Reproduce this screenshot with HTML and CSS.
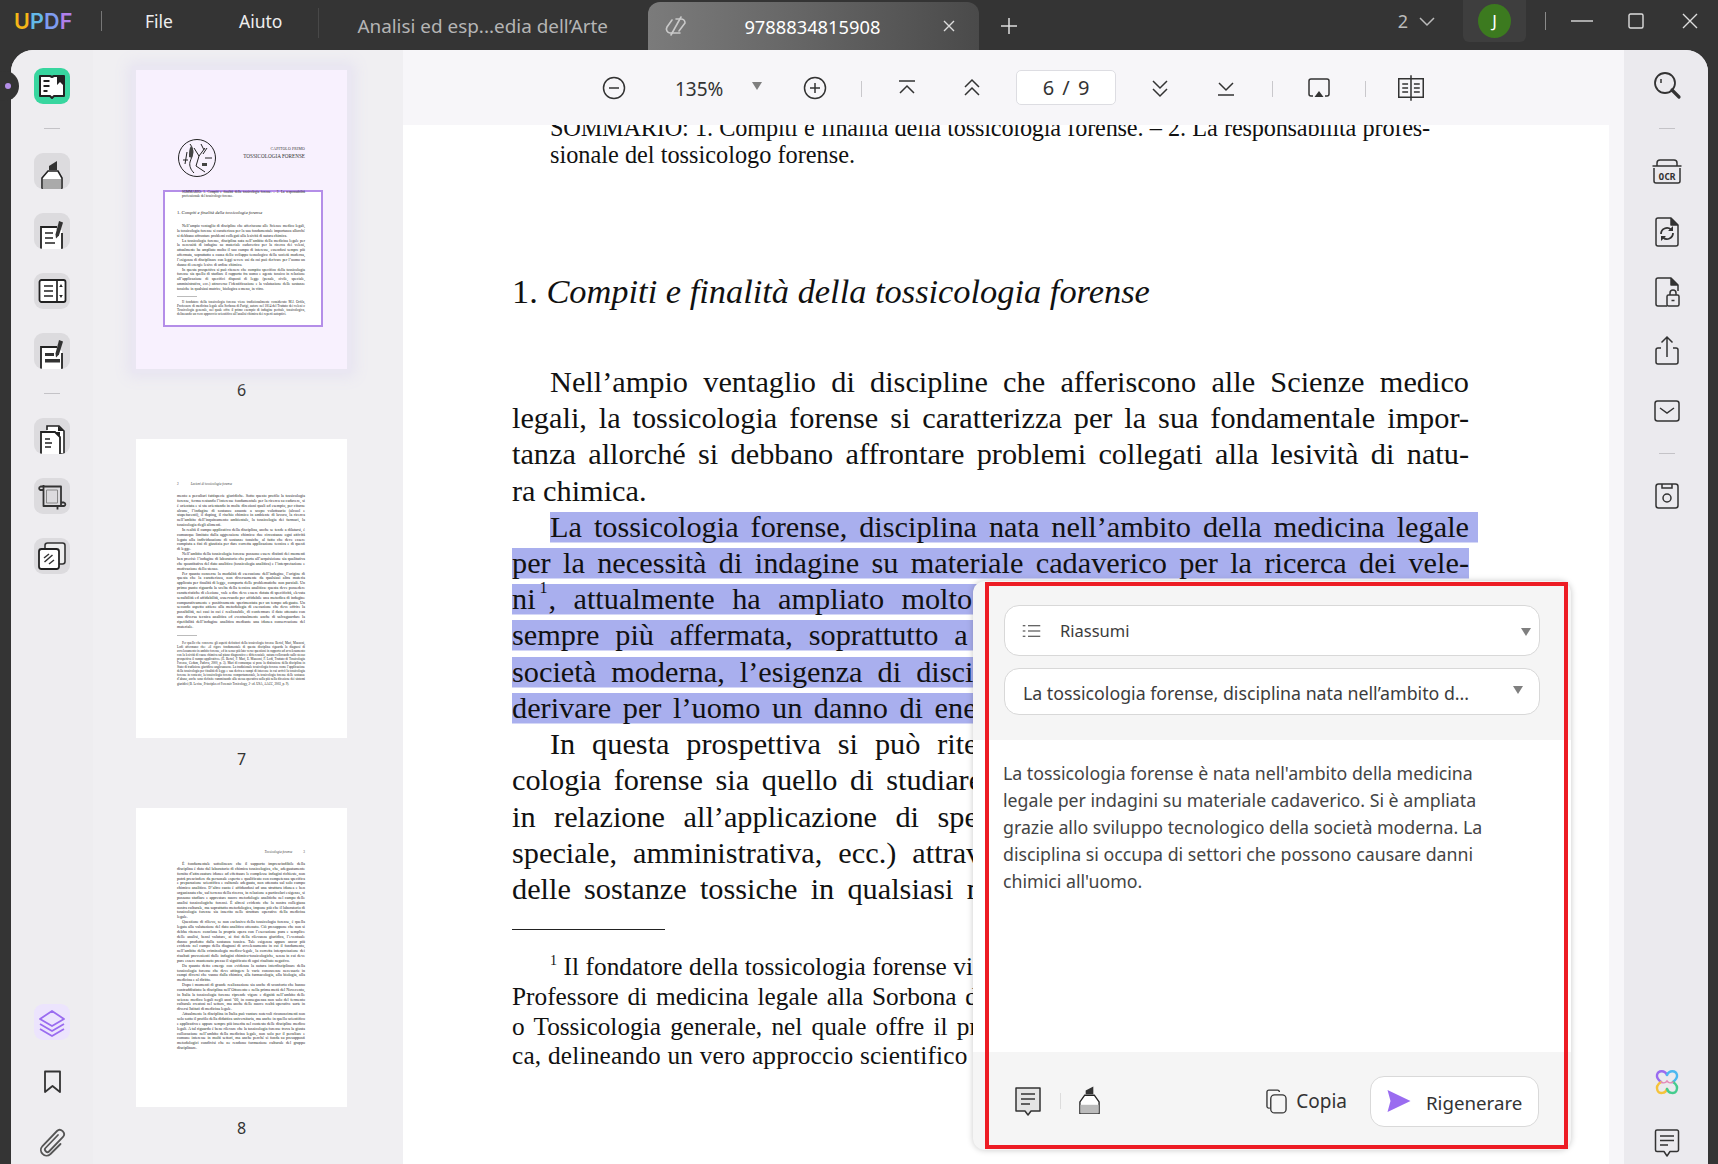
FILE: index.html
```html
<!DOCTYPE html>
<html lang="it">
<head>
<meta charset="utf-8">
<title>UPDF</title>
<link rel="stylesheet" href="styles.css">
</head>
<body>
<div class="app">
  <header class="titlebar">
    <div class="logo"><span class="l-u">U</span><span class="l-p">P</span><span class="l-d">D</span><span class="l-f">F</span></div>
    <i class="tsep tsep-logo"></i>
    <span class="menu menu-file">File</span>
    <span class="menu menu-aiuto">Aiuto</span>
    <i class="tsep tsep-dim"></i>
    <span class="tab-off">Analisi ed esp...edia dell’Arte</span>
    <div class="tab-on">
      <svg class="tab-link" viewBox="0 0 24 24" fill="none" stroke="#c9c9c9" stroke-width="1.6" stroke-linecap="round"><path d="M12 5h5a4 4 0 0 1 4 4v0L15 17"/><path d="M8 6 3 13a4 4 0 0 0 3 6h10"/><path d="M17 3 7 21"/></svg>
      <span class="tab-title">9788834815908</span>
      <svg class="tab-x" viewBox="0 0 14 14" stroke="#ddd" stroke-width="1.4"><path d="M2 2l10 10M12 2 2 12"/></svg>
    </div>
    <svg class="tab-plus" viewBox="0 0 18 18" stroke="#ddd" stroke-width="1.5"><path d="M9 1v16M1 9h16"/></svg>
    <div class="tb-right">
      <span class="pages-count">2</span>
      <svg class="chev" viewBox="0 0 16 10" fill="none" stroke="#bbb" stroke-width="1.5"><path d="M1 1l7 7 7-7"/></svg>
      <div class="avatar-box"><span class="avatar">J</span></div>
      <i class="tsep tsep-win"></i>
      <svg class="win win-min" viewBox="0 0 22 14" stroke="#ddd" stroke-width="1.4"><path d="M0 7h22"/></svg>
      <svg class="win win-max" viewBox="0 0 16 16" fill="none" stroke="#ddd" stroke-width="1.4"><rect x="1" y="1" width="14" height="14" rx="1.5"/></svg>
      <svg class="win win-close" viewBox="0 0 16 16" stroke="#ddd" stroke-width="1.4"><path d="M1 1l14 14M15 1 1 15"/></svg>
    </div>
  </header>

  <i class="notch"></i><i class="notch-dot"></i>

  <main class="panel">
    <nav class="rail">
      <div class="tile tile-green">
        <svg viewBox="0 0 36 36"><path d="M6 8h10l2 1 2-1h10v20H20l-2 2-2-2H6z" fill="#fff" stroke="#222" stroke-width="2" stroke-linejoin="round"/><path d="M23 8h6v9l-3-3-3 3z" fill="#222"/><path d="M9.500 13h6M9.500 18h6M9.500 23h4" stroke="#222" stroke-width="1.800"/></svg>
      </div>
      <i class="rsep"></i>
      <div class="tile">
        <svg viewBox="0 0 36 36"><path d="M8 36V25l6-7h10l4 7v11z" fill="#fff" stroke="#222" stroke-width="1.600"/><path d="M9 26h18v10H9z" fill="#aaa"/><path d="M15 17v-4l8-5v9z" fill="#333"/></svg>
      </div>
      <div class="tile">
        <svg viewBox="0 0 36 36"><path d="M7 36V14h15v3h6v19z" fill="#fff"/><path d="M7 36V14h16M28 20v16" fill="none" stroke="#222" stroke-width="1.800"/><path d="M11 20h8M11 25h8M11 30h10" stroke="#222" stroke-width="1.600"/><path d="M25 8l4 1.500-4 13-3 3-.5-4z" fill="#333"/></svg>
      </div>
      <div class="tile">
        <svg viewBox="0 0 36 36"><rect x="5.500" y="7" width="26" height="22" rx="2" fill="#fff" stroke="#222" stroke-width="1.800"/><path d="M23 7v22M10 13h9M10 18h9M10 23h9" stroke="#222" stroke-width="1.700"/><path d="M27 11l-1.800 3h3.600zM27 25l-1.800-3h3.600z" fill="#222"/></svg>
      </div>
      <div class="tile">
        <svg viewBox="0 0 36 36"><path d="M7 36V14h15l6 4v18z" fill="#fff"/><path d="M7 36V14h16M28 20v16" fill="none" stroke="#222" stroke-width="1.800"/><path d="M11 20h9v3h-9zM11 26h15v3.500H11z" fill="#333"/><path d="M25 7l4 1.500-4 13-3 3-.5-4z" fill="#333"/></svg>
      </div>
      <i class="rsep"></i>
      <div class="tile">
        <svg viewBox="0 0 36 36"><path d="M13 12V8h12l5 5v23h-3" fill="#fff" stroke="#222" stroke-width="1.600"/><path d="M7 36V14h14l5 5v17z" fill="#fff"/><path d="M7 36V14h14l5 5v17" fill="none" stroke="#222" stroke-width="1.800"/><path d="M21 14h5v5zM24 8l6 5h-6z" fill="#222"/><path d="M11 21h5M11 25h7M11 29h6" stroke="#222" stroke-width="1.500"/></svg>
      </div>
      <div class="tile">
        <svg viewBox="0 0 36 36" fill="none" stroke="#333" stroke-width="1.800" stroke-linejoin="round"><path d="M9.500 7v21h17.500V8.500H6.500a1.800 1.800 0 0 0 0 3.500h3M27 24.500h3a1.800 1.800 0 0 1 0 3.500h-3M23.500 28v3.500"/><path d="M12.500 12h11v13h-11z" stroke="#888" stroke-width="1"/></svg>
      </div>
      <div class="tile">
        <svg viewBox="0 0 36 36"><rect x="11" y="5" width="20" height="21" rx="2.500" fill="#eee" stroke="#333" stroke-width="1.600"/><rect x="5" y="11" width="20" height="20" rx="2.500" fill="#fff" stroke="#222" stroke-width="1.800"/><path d="M10 20l5-4M10.500 24l8-7M15 26l5-4" stroke="#333" stroke-width="1.500"/></svg>
      </div>
      <div class="tile tile-purple rail-bottom">
        <svg viewBox="0 0 36 36" fill="none" stroke="#9a6cf0" stroke-width="1.800" stroke-linejoin="round"><path d="M18 7 30 15 18 22 6 15z"/><path d="M6 20l12 7 12-7M6 25l12 7 12-7"/></svg>
      </div>
      <div class="tile tile-plain">
        <svg viewBox="0 0 36 36" fill="none" stroke="#333" stroke-width="1.800" stroke-linejoin="round"><path d="M11 7.500h15V28l-7.500-6L11 28z"/></svg>
      </div>
      <div class="tile tile-plain">
        <svg viewBox="0 0 36 36" fill="none" stroke="#555" stroke-width="1.800" stroke-linecap="round"><path d="M24 11 11.500 24c-2 2 1.500 5.500 3.500 3.500L29 13c3.500-4-2.500-9.500-6-6L8.500 22c-5 5.500 2.500 13 8 8l10-10"/></svg>
      </div>
    </nav>

    <aside class="thumbs">
      <div class="thumb">
        <div class="sheet sheet-active">
          <i class="viewport"></i>
          <div class="t-open">
            <svg class="t-emblem" viewBox="0 0 40 40" fill="none" stroke="#222"><circle cx="20" cy="20" r="18.500" stroke-width="1"/><path d="M13 6c5 6 2 12 0 18-1 4 1 8 4 11M17 10l5 8 6-8M22 18l-3 10 9 6M28 20h7M10 14l-2 12M24 6l3 6M30 10l-4 6M6 22h5" stroke-width="1"/><path d="M14 8c3 4 3 7 1 12l-3-1c0-5 0-8 2-11zM25 25h5v3h-5z" fill="#444" stroke="none"/></svg>
            <div class="t-titles"><div class="t-chap">CAPITOLO PRIMO</div><div class="t-chaptitle">TOSSICOLOGIA FORENSE</div></div>
          </div>
          <p class="t-summary">SOMMARIO: 1. Compiti e finalità della tossicologia forense. – 2. La responsabilità professionale del tossicologo forense.</p>
          <p class="t-head">1. <em>Compiti e finalità della tossicologia forense</em></p>
          <p class="t-p">Nell’ampio ventaglio di discipline che afferiscono alle Scienze medico legali, la tossicologia forense si caratterizza per la sua fondamentale importanza allorché si debbano affrontare problemi collegati alla lesività di natura chimica.</p>
          <p class="t-p">La tossicologia forense, disciplina nata nell’ambito della medicina legale per la necessità di indagine su materiale cadaverico per la ricerca dei veleni, attualmente ha ampliato molto il suo campo di interesse, essendosi sempre più affermata, soprattutto a causa dello sviluppo tecnologico della società moderna, l’esigenza di disciplinare con leggi severe usi da cui può derivare per l’uomo un danno di energie lesive di ordine chimico.</p>
          <p class="t-p">In questa prospettiva si può ritenere che compito specifico della tossicologia forense sia quello di studiare il rapporto fra uomo e agente tossico in relazione all’applicazione di specifici disposti di legge (penale, civile, speciale, amministrativa, ecc.) attraverso l’identificazione e la valutazione delle sostanze tossiche in qualsiasi matrice, biologica o meno, in vitro.</p>
          <i class="t-rule"></i>
          <p class="t-foot">Il fondatore della tossicologia forense viene tradizionalmente considerato M.J. Orfila, Professore di medicina legale alla Sorbona di Parigi, autore nel 1814 del Trattato dei veleni o Tossicologia generale, nel quale offre il primo esempio di indagine peritale, tossicologica, delineando un vero approccio scientifico all’analisi chimica dei reperti autoptici.</p>
        </div>
        <div class="thumb-num">6</div>
      </div>
      <div class="thumb">
        <div class="sheet">
          <div class="t-run"><span>2</span><em>Lezioni di tossicologia forense</em></div>
          <p class="t-p t-first">mento a peculiari fattispecie giuridiche. Sotto questo profilo la tossicologia forense, ferma restando l’interesse fondamentale per la ricerca su cadavere, si è orientata e si sta orientando in molte direzioni quali ad esempio, per citarne alcune, l’indagine di sostanze assunte a scopo voluttuario (alcool e stupefacenti), il doping, il rischio chimico in ambiente di lavoro, la ricerca nell’ambito dell’inquinamento ambientale, la tossicologia dei farmaci, la tossicologia degli alimenti.</p>
          <p class="t-p">In realtà il campo applicativo della disciplina, anche se tende a dilatarsi, è comunque limitato dalla aggressione chimica: due circostanze ogni attività legata alla individuazione di sostanze tossiche, al fatto che deve essere compiuta a fini di giustizia per dare corretta applicazione tecnica e di questi di legge.</p>
          <p class="t-p">Nell’ambito della tossicologia forense possono essere distinti dei momenti ben precisi: l’indagine di laboratorio che porta all’acquisizione sia qualitativa che quantitativa del dato analitico (tossicologia analitica) e l’interpretazione e motivazione dello stesso.</p>
          <p class="t-p">Per quanto concerne la modalità di esecuzione dell’indagine, l’origine di questa che la caratterizza, non diversamente da qualsiasi altra materia applicata per finalità di legge, comporta delle problematiche non parziali. Un primo punto riguarda la scelta della tecnica analitica: questa deve possedere caratteristiche di elezione, vale a dire deve essere dotata di specificità, elevata sensibilità ed affidabilità, osservando per affidabile una metodica di indagine comparativamente e positivamente sperimentata per un tempo adeguato. Un secondo aspetto attiene alla metodologia di esecuzione che deve offrire la possibilità, nei casi in cui è realizzabile, di confermare il dato ottenuto con una diversa tecnica analitica ed eventualmente anche di salvaguardare la ripetibilità dell’indagine analitica mediante una idonea conservazione del materiale.</p>
          <i class="t-rule t-rule-7"></i>
          <p class="t-foot t-foot-dense">Per quello che concerne gli aspetti definitori della tossicologia forense Bertol, Mari, Mazzoni, Lodi affermano che: «il rigore fondamentale di questa disciplina riguarda la diagnosi di avvelenamento in ambito forense, ed in senso più lato verso questioni in rapporto ad avvelenamento con la lesività di cause chimica sul piano diagnostico e differenziale, natura collocando sullo stesso prospettiva il campo applicativo» (E. Bertol, F. Mari, E. Mazzoni, F. Lodi, Trattato di Tossicologia Forense, Cedam, Padova, 2000, p. 3). Mari di comunque si pone la distinzione della disciplina in Stato di tradizione giuridica: anglosassone. La tradizionale tossicologia forense come l’applicazione della tossicologia per finalità di legge e sua deriva a campi di interesse in cui arrivò la tossicologia forense in contesto, la tossicologia forense comportamentale, la tossicologia forense delle sostanze d’abuso, anche sono definite camminando alla stessa operativa sulla più nella direzione dei sintomi giuridici (B. Levine, Principles of Forensic Toxicology, 2ª ed. USA, AACC, 2003, p. 9).</p>
        </div>
        <div class="thumb-num">7</div>
      </div>
      <div class="thumb">
        <div class="sheet">
          <div class="t-run t-run-right"><em>Tossicologia forense</em><span>3</span></div>
          <p class="t-p t-first8">È fondamentale sottolineare che il supporto imprescindibile della disciplina è dato dal laboratorio di chimica tossicologica, che, adeguatamente fornito d’attrezzature idonee ad effettuare le complesse indagini richieste, non potrà prescindere da personale esperto e qualificato con competenza specifica e preparazione scientifica e culturale adeguata, non ottenuta sul solo campo chimico analitico. D’altro canto è affidandosi ad una struttura idonea e ben organizzata che, sul terreno della ricerca, in relazione a particolari esigenze, si possono studiare e apprestare nuove metodologie analitiche nel campo delle analisi tossicologiche forensi. È altresì evidente che la nostra collegiana nostra culturale, ma soprattutto metodologica, impone più che il laboratorio di tossicologia forense sia inserito nelle strutture operative della medicina legale.</p>
          <p class="t-p">Questione di rilievo, se non esclusivo della tossicologia forense, è quella legata alla valutazione del dato analitico ottenuto. Ciò presuppone che non si debba ritenere conclusa la propria opera con l’esecuzione pura e semplice delle analisi, bensì valutare, ai fini della rilevanza giuridica, l’eventuale danno prodotto dalla sostanza tossica. Tale esigenza appare ancor più evidente nel campo della diagnosi di avvelenamento in cui il fondamento, nell’ambito della criminologia medico-legale, la corretta interpretazione dei risultati provenienti dalle indagini chimico-tossicologiche, senza in cui deve pure essere mantenuto presso il significato di ogni risultato negativo.</p>
          <p class="t-p">Da quanto detto emerge con evidenza la natura interdisciplinare della tossicologia forense che deve attingere le varie conoscenze necessarie in campi diversi che vanno dalla chimica, alla farmacologia, alla biologia, alla medicina e al diritto.</p>
          <p class="t-p">Dopo i momenti di grande realizzazione sia anche di sconforto che hanno contraddistinto la disciplina nell’Ottocento e nella prima metà del Novecento, in Italia la tossicologia forense riprende vigore e dignità nell’ambito delle scienze medico legali negli anni ’60, in conseguenza non solo del fermento culturale creatosi nel settore, ma anche delle nuove realtà operative sorte in diversi Istituti di medicina legale.</p>
          <p class="t-p">Attualmente la disciplina in Italia può vantare notevoli riconoscimenti non solo sotto il profilo della didattica universitaria, ma anche in quello scientifico e applicativo e appare sempre più inserita nel contesto delle discipline medico legali. A tal riguardo è bene rilevare che la tossicologia forense trova la giusta collocazione nell’ambito della medicina legale, non solo per il peculiare e comune interesse in molti settori, ma anche perché si fonda su presupposti metodologici condivisi che ne rendono formazione culturale del gruppo disciplinare.</p>
        </div>
        <div class="thumb-num">8</div>
      </div>
    </aside>

    <section class="center">
      <div class="toolbar">
        <svg class="tic" viewBox="0 0 24 24" fill="none" stroke="#333" stroke-width="1.500"><circle cx="12" cy="12" r="10.500"/><path d="M7 12h10"/></svg>
        <span class="zoom-val">135%</span>
        <i class="caret caret-zoom"></i>
        <svg class="tic tic-plus" viewBox="0 0 24 24" fill="none" stroke="#333" stroke-width="1.500"><circle cx="12" cy="12" r="10.500"/><path d="M7 12h10M12 7v10"/></svg>
        <i class="bar bar-a"></i>
        <svg class="tic tic-top" viewBox="0 0 24 24" fill="none" stroke="#333" stroke-width="1.500"><path d="M4 5h16M5 17l7-7 7 7"/></svg>
        <svg class="tic tic-wide" viewBox="0 0 24 24" fill="none" stroke="#333" stroke-width="1.500"><path d="M5 11l7-7 7 7M5 19l7-7 7 7"/></svg>
        <div class="pager">6 / 9</div>
        <svg class="tic" viewBox="0 0 24 24" fill="none" stroke="#333" stroke-width="1.500"><path d="M5 5l7 7 7-7M5 13l7 7 7-7"/></svg>
        <svg class="tic tic-wide tic-bottom" viewBox="0 0 24 24" fill="none" stroke="#333" stroke-width="1.500"><path d="M5 7l7 7 7-7M4 19h16"/></svg>
        <i class="bar"></i>
        <svg class="tic tic-present" viewBox="0 0 24 24" fill="none" stroke="#333" stroke-width="1.500"><path d="M6 20H4a2 2 0 0 1-2-2V5a2 2 0 0 1 2-2h16a2 2 0 0 1 2 2v13a2 2 0 0 1-2 2h-2"/><path d="M12 15l4.500 6h-9z" fill="#333" stroke="none"/></svg>
        <i class="bar"></i>
        <svg class="tic tic-book" viewBox="0 0 24 24" fill="none" stroke="#333" stroke-width="1.300"><path d="M12 1v22M12 4H1.500v16H12M12 4h10.500v16H12"/><path d="M4.500 8.500h5M4.500 12h5M4.500 15.500h5M14.500 8.500h5M14.500 12h5M14.500 15.500h5"/></svg>
      </div>
      <div class="docarea">
        <article class="page">
          <div class="summary">
            <div class="ln ln-tight">SOMMARIO: 1. Compiti e finalità della tossicologia forense. – 2. La responsabilità profes-</div>
            <div class="ln ln-end">sionale del tossicologo forense.</div>
          </div>
          <h1 class="heading">1. <em>Compiti e finalità della tossicologia forense</em></h1>
          <div class="body">
            <div class="ln ind">Nell’ampio ventaglio di discipline che afferiscono alle Scienze medico</div>
            <div class="ln">legali, la tossicologia forense si caratterizza per la sua fondamentale impor-</div>
            <div class="ln">tanza allorché si debbano affrontare problemi collegati alla lesività di natu-</div>
            <div class="ln ln-end">ra chimica.</div>
            <div class="ln ind sel sel-first">La tossicologia forense, disciplina nata nell’ambito della medicina legale</div>
            <div class="ln sel">per la necessità di indagine su materiale cadaverico per la ricerca dei vele-</div>
            <div class="ln sel">ni<sup class="fn">1</sup>, attualmente ha ampliato molto il suo campo di interesse, essendosi</div>
            <div class="ln sel">sempre più affermata, soprattutto a causa del progresso tecnologico della</div>
            <div class="ln sel">società moderna, l’esigenza di disciplinare con leggi severe usi cui possa</div>
            <div class="ln sel">derivare per l’uomo un danno di energie lesive di ordine chimico o fisico e</div>
            <div class="ln ind">In questa prospettiva si può ritenere che compito specifico della tos-</div>
            <div class="ln">cologia forense sia quello di studiare il rapporto fra uomo e agente tossico</div>
            <div class="ln">in relazione all’applicazione di specifici dettati di legge (penale, civile,</div>
            <div class="ln">speciale, amministrativa, ecc.) attraverso l’individuazione e la valutazione</div>
            <div class="ln">delle sostanze tossiche in qualsiasi matrice, biologica o meno, sia in vitro.</div>
          </div>
          <i class="rule"></i>
          <div class="notes">
            <div class="ln ind"><sup class="fn2">1</sup> Il fondatore della tossicologia forense viene tradizionalmente considerato M. J. B. Orfila,</div>
            <div class="ln">Professore di medicina legale alla Sorbona di Parigi, autore nel 1814 del Trattato dei veleni</div>
            <div class="ln">o Tossicologia generale, nel quale offre il primo esempio di indagine peritale e tossicologi-</div>
            <div class="ln ln-end ln-loose">ca, delineando un vero approccio scientifico all’analisi chimica dei reperti autoptici.</div>
          </div>
        </article>
      </div>

      <div class="popup">
        <div class="pop-head">
          <div class="dd dd-a">
            <svg class="dd-ic" viewBox="0 0 20 16" stroke="#333" stroke-width="1.200"><path d="M6 2h14M6 8h14M6 14h14M0 2h3M0 8h3M0 14h3"/></svg>
            <span>Riassumi</span>
            <i class="caret caret-dd"></i>
          </div>
          <div class="dd dd-b">
            <span>La tossicologia forense, disciplina nata nell’ambito d...</span>
            <i class="caret caret-dd2"></i>
          </div>
        </div>
        <div class="pop-body">La tossicologia forense è nata nell'ambito della medicina<br>legale per indagini su materiale cadaverico. Si è ampliata<br>grazie allo sviluppo tecnologico della società moderna. La<br>disciplina si occupa di settori che possono causare danni<br>chimici all'uomo.</div>
        <div class="pop-foot">
          <svg class="pf-note" viewBox="0 0 28 30"><path d="M2 2h24v23h-9l-3 4-3-4H2z" fill="#e4e4e4" stroke="#333" stroke-width="1.500" stroke-linejoin="round"/><path d="M7 8h14M7 13h14M7 18h9" stroke="#333" stroke-width="1.500"/></svg>
          <i class="pf-sep"></i>
          <svg class="pf-mark" viewBox="0 0 24 30"><path d="M2 29V17l5-7h10l5 7v12z" fill="#fff" stroke="#222" stroke-width="1.400"/><path d="M2.500 20h19v9h-19z" fill="#bbb"/><path d="M8 9V5l8-4v8z" fill="#333"/></svg>
          <svg class="pf-copy" viewBox="0 0 22 26" fill="none" stroke="#333" stroke-width="1.400"><path d="M4 20H3a2 2 0 0 1-2-2V3a2 2 0 0 1 2-2h9a2 2 0 0 1 2 2"/><rect x="5" y="6" width="16" height="19" rx="4" /></svg>
          <span class="pf-copytxt">Copia</span>
          <div class="regen">
            <svg class="regen-ic" viewBox="0 0 24 24"><path d="M1 1l23 11L1 23l3-11z" fill="#9a6cf0"/></svg>
            <span>Rigenerare</span>
          </div>
        </div>
        <i class="annot"></i>
      </div>
    </section>

    <div class="gutter"></div>

    <nav class="rail rail-r">
      <div class="tile tile-plain">
        <svg viewBox="0 0 36 36" fill="none" stroke="#333" stroke-width="1.800"><circle cx="16" cy="15" r="10"/><path d="M12 11v4" stroke-width="1.500"/><path d="M23 22l7 7" stroke-width="3.200" stroke-linecap="round"/></svg>
      </div>
      <i class="rsep"></i>
      <div class="tile tile-plain">
        <svg viewBox="0 0 36 36" fill="none" stroke="#333" stroke-width="1.500"><path d="M8 13v-3a3 3 0 0 1 3-3h14a3 3 0 0 1 3 3v3M3.500 13h29M5 15v13a2 2 0 0 0 2 2h22a2 2 0 0 0 2-2V15"/><text x="18" y="26.500" class="ocr">OCR</text></svg>
      </div>
      <div class="tile tile-plain">
        <svg viewBox="0 0 36 36" fill="none" stroke="#333" stroke-width="1.500" stroke-linejoin="round"><path d="M9 5h13l7 7v19a2 2 0 0 1-2 2H9a2 2 0 0 1-2-2V7a2 2 0 0 1 2-2z"/><path d="M22 5v7h7" fill="#333"/><path d="M12 21a6 6 0 0 1 10-4.500M24 20a6 6 0 0 1-10 4.500" stroke-width="1.800"/><path d="M24 13v5h-5zM12 28v-5h5z" fill="#333" stroke="none"/></svg>
      </div>
      <div class="tile tile-plain">
        <svg viewBox="0 0 36 36" fill="none" stroke="#333" stroke-width="1.500" stroke-linejoin="round"><path d="M18 33H9a2 2 0 0 1-2-2V7a2 2 0 0 1 2-2h13l7 7v6"/><path d="M22 5v7h7" fill="#333"/><rect x="18" y="22" width="12" height="11" rx="1.500"/><path d="M21 22v-2a3 3 0 0 1 6 0v2M22.500 27.500h3"/></svg>
      </div>
      <div class="tile tile-plain">
        <svg viewBox="0 0 36 36" fill="none" stroke="#333" stroke-width="1.500"><path d="M12 15H9a2 2 0 0 0-2 2v12a2 2 0 0 0 2 2h18a2 2 0 0 0 2-2V17a2 2 0 0 0-2-2h-3M18 24V4M12.500 9.500 18 4l5.500 5.500"/></svg>
      </div>
      <div class="tile tile-plain">
        <svg viewBox="0 0 36 36" fill="none" stroke="#333" stroke-width="1.500"><rect x="6" y="8" width="24" height="20" rx="2.500"/><path d="M11 15l7 5 7-5"/></svg>
      </div>
      <i class="rsep"></i>
      <div class="tile tile-plain">
        <svg viewBox="0 0 36 36" fill="none" stroke="#333" stroke-width="1.500"><rect x="7" y="6" width="22" height="24" rx="2.500"/><path d="M13 6v4h10V6"/><circle cx="18" cy="20" r="4"/></svg>
      </div>
      <div class="tile tile-plain rail-bottom">
        <svg viewBox="0 0 36 36" fill="none" stroke-width="2.400" stroke-linecap="round"><path d="M18 11c-2-5-9-5-10 0-.5 3 1.500 5 4 7" stroke="#9a6cf0"/><path d="M18 11c2-5 9-5 10 0 .5 3-1.500 5-4 7" stroke="#4db8f0"/><path d="M12 18c-3 2-5 5-3.500 8.500 2 4 8 3 9.500-1.500" stroke="#f5c33b"/><path d="M24 18c3 2 5 5 3.500 8.500-2 4-8 3-9.500-1.500" stroke="#45cc8e"/><path d="M12 18c2 1 4 2 6-1 2 3 4 2 6 1" stroke="#e48ab8" stroke-width="1.500"/></svg>
      </div>
      <div class="tile tile-plain">
        <svg viewBox="0 0 36 36" fill="none" stroke="#333" stroke-width="1.500" stroke-linejoin="round"><path d="M8 6h20a1.500 1.500 0 0 1 1.500 1.500V26a1.500 1.500 0 0 1-1.500 1.500h-7L18 32l-3-4.500H8A1.500 1.500 0 0 1 6.500 26V7.500A1.500 1.500 0 0 1 8 6z"/><path d="M11 12h14M11 16.500h14M11 21h8"/></svg>
      </div>
    </nav>
  </main>
</div>
</body>
</html>
```

FILE: styles.css
```css
* { box-sizing: border-box; }
html, body { margin: 0; padding: 0; }
body { background: #343434; font-family: "Noto Sans", "Open Sans", sans-serif; color: #333; }
i { display: block; }
.app { position: relative; width: 1718px; height: 1164px; overflow: hidden; display: flex; flex-direction: column; }

/* Title bar */
.titlebar { height: 50px; flex: none; display: flex; align-items: flex-start; color: #eee; }
.logo { margin: 6px 0 0 14px; width: 58px; font: 600 21.500px/30px "Inter", "Noto Sans", sans-serif; letter-spacing: .2px; }
.l-u { color: #f4b619; } .l-p { color: #63b9e8; } .l-d { color: #7f9cf0; } .l-f { color: #b07fea; }
.tsep { width: 1px; background: #777; }
.tsep-logo { height: 20px; margin: 11px 0 0 29px; }
.menu { font-size: 17.500px; line-height: 24px; margin-top: 9px; color: #eee; }
.menu-file { margin-left: 43px; }
.menu-aiuto { margin-left: 66px; }
.tsep-dim { height: 30px; margin: 8px 0 0 36px; background: #484848; }
.tab-off { font-size: 18.900px; line-height: 26px; margin: 13px 0 0 38px; color: #b5b5b5; width: 291px; white-space: nowrap; }
.tab-on { width: 331px; height: 48px; margin-top: 2px; border-radius: 12px 12px 0 0; background: linear-gradient(90deg, #7b7b7b, #666 45%, #4a4a4a); display: flex; align-items: center; }
.tab-link { width: 24px; height: 24px; margin-left: 16px; }
.tab-title { font-size: 18.300px; margin-left: 56px; color: #fff; width: 136px; white-space: nowrap; }
.tab-x { width: 14px; height: 14px; margin-left: 62px; }
.tab-plus { width: 18px; height: 18px; margin: 17px 0 0 21px; }
.tb-right { margin-left: auto; display: flex; align-items: flex-start; }
.pages-count { font-size: 18px; line-height: 26px; margin-top: 8px; color: #bbb; }
.chev { width: 16px; height: 10px; margin: 17px 0 0 11px; }
.avatar-box { width: 63px; height: 42px; margin-left: 28px; border-radius: 0 0 6px 6px; background: #3e3e3e; display: flex; align-items: center; justify-content: center; }
.avatar { width: 33px; height: 34px; border-radius: 50%; background: #3c7a1f; color: #fff; font-size: 17px; line-height: 34px; text-align: center; }
.tsep-win { height: 18px; margin: 12px 0 0 19px; background: #8a8a8a; }
.win { flex: none; }
.win-min { width: 22px; height: 14px; margin: 14px 0 0 25px; }
.win-max { width: 16px; height: 16px; margin: 13px 0 0 35px; }
.win-close { width: 16px; height: 16px; margin: 13px 20px 0 38px; }

/* Notch */
.notch { position: absolute; left: -9px; top: 71px; width: 28px; height: 30px; border-radius: 50%; background: #343434; z-index: 3; }
.notch-dot { position: absolute; left: 5px; top: 83px; width: 6px; height: 6px; border-radius: 50%; background: #b48ee8; z-index: 4; }

/* Panel */
.panel { flex: 1; min-height: 0; margin: 0 10px 0 11px; display: flex; border-radius: 22px 22px 0 0; overflow: hidden; background: #eeedf0; }
.rail { width: 82px; flex: none; display: flex; flex-direction: column; align-items: center; gap: 24px; padding: 18px 0 4px; background: #eeedf0; }
.rail-r { width: 84px; padding-left: 2px; background: #ebeaee; }
.rail-bottom { margin-top: auto; }
.tile { width: 36px; height: 36px; flex: none; border-radius: 9px; background: #dcdbde; overflow: hidden; }
.tile svg { display: block; width: 36px; height: 36px; }
.tile-green { background: #38d69f; }
.tile-purple { background: #ece4fd; }
.tile-plain { background: none; overflow: visible; }
.rsep { width: 16px; height: 1px; flex: none; background: #c4c3c7; }
.ocr { font: 700 9.500px "DejaVu Sans Mono", monospace; fill: #333; stroke: none; text-anchor: middle; }

/* Thumbnails */
.thumbs { width: 310px; flex: none; padding: 20px 0 0 43px; display: flex; flex-direction: column; gap: 38px; background: #f0eff2; overflow: hidden; }
.thumb { width: 211px; flex: none; }
.thumb-num { margin-top: 10px; height: 22px; font-size: 16px; line-height: 22px; text-align: center; color: #333; }
.sheet { position: relative; width: 211px; height: 299px; padding: 0 42px 0 41px; background: #fff; font-family: "Liberation Serif", serif; color: #222; font-size: 4.100px; line-height: 4.850px; text-align: justify; }
.sheet p { margin: 0; position: relative; }
.sheet-active { background: #f8f1fe; box-shadow: 0 0 0 4px #eae7f2, 0 0 14px 8px #e6e3f0; font-size: 3.900px; }
.viewport { position: absolute; left: 27px; top: 120px; width: 160px; height: 137px; border: 2px solid #b48ee8; background: #fff; }
.t-open { position: relative; display: flex; justify-content: space-between; align-items: flex-start; padding-top: 68px; height: 120px; }
.t-emblem { width: 40px; height: 40px; flex: none; }
.t-titles { text-align: right; padding-top: 8px; color: #333; }
.t-chap { font-size: 3.800px; letter-spacing: .2px; line-height: 6px; }
.t-chaptitle { font-size: 5.200px; line-height: 9px; white-space: nowrap; }
.t-summary { padding-left: 5px; font-size: 3.400px; line-height: 4px; }
.t-head { margin-top: 12px !important; margin-bottom: 8px !important; font-size: 4.600px; line-height: 6px; text-align: left; }
.t-p { text-indent: 5px; }
.t-rule { position: relative; width: 20px; height: 1px; margin: 4px 0 3px; background: #bbb; }
.t-foot { font-size: 3.400px; line-height: 4px; text-indent: 5px; }
.t-run { display: flex; gap: 12px; padding-top: 43px; height: 50px; font-size: 3.400px; line-height: 5px; color: #444; }
.t-run-right { justify-content: flex-end; gap: 11px; padding-top: 42px; height: 50px; }
.t-first { margin-top: 5px !important; text-indent: 0; }
.t-first8 { margin-top: 4px !important; }
.t-rule-7 { margin: 5px 0 5px; }
.t-foot-dense { font-size: 3.200px; line-height: 4.100px; }

/* Center */
.center { position: relative; width: 1221px; flex: none; display: flex; flex-direction: column; background: #f7f6f9; }
.toolbar { height: 75px; flex: none; padding: 2px 0 0 199px; display: flex; align-items: center; gap: 34px; background: #f7f6f9; }
.tic { width: 24px; height: 24px; flex: none; margin-top: -2px; }
.tic-plus { margin-left: 7px; }
.tic-top { margin-left: -1px; }
.tic-wide { margin-left: 7px; }
.tic-bottom { margin-left: 8px; }
.tic-book { width: 28px; height: 28px; margin-left: -3px; }
.zoom-val { width: 48px; margin-left: 15px; margin-right: -5px; font-size: 19px; color: #333; flex: none; }
.caret { width: 0; height: 0; border-left: 5px solid transparent; border-right: 5px solid transparent; border-top: 8px solid #7f7f7f; flex: none; }
.caret-zoom { margin-top: -6px; }
.bar { width: 1px; height: 16px; flex: none; background: #c9c8cc; }
.pager { width: 100px; height: 35px; flex: none; margin: -3px -2px 0 -2px; border: 1px solid #dddde2; border-radius: 5px; background: #fff; font-size: 20px; line-height: 33px; text-align: center; word-spacing: 3px; color: #333; }
.docarea { width: 1206px; flex: 1; min-height: 0; background: #fff; overflow: hidden; }
.page { margin-top: -11px; padding-left: 109px; width: 1066px; font-family: "Liberation Serif", serif; color: #111; }
.ln { text-align: justify; text-align-last: justify; white-space: nowrap; }
.ln-end { text-align-last: left; }
.ln-tight { letter-spacing: -.2px; }
.ln-loose { letter-spacing: .2px; }
.summary { margin-left: 38px; margin-right: 39px; font-size: 24.300px; line-height: 27.400px; }
.heading { margin: 97px 0 0; font-size: 34.400px; font-weight: 400; line-height: 50px; }
.body { margin-top: 48px; font-size: 30.300px; line-height: 36.240px; }
.ind { margin-left: 38px; }
.sel { background: linear-gradient(#a9afee, #a9afee) 0 3px / 100% 30.500px no-repeat; }
.sel-first { margin-right: -9px; padding-right: 9px; }
.fn { font-size: 16px; line-height: 0; vertical-align: 16px; padding: 0 1px 0 4px; }
.fn2 { font-size: 14px; line-height: 0; vertical-align: 10px; }
.rule { width: 153px; height: 1px; margin-top: 22px; background: #222; }
.notes { margin-top: 22px; font-size: 25.300px; line-height: 29.600px; }

.gutter { width: 0; flex: none; }

/* Popup */
.popup { position: absolute; left: 570px; top: 531px; width: 598px; height: 569px; display: flex; flex-direction: column; background: #f5f5f5; border-radius: 12px; box-shadow: 0 0 6px rgba(0,0,0,.22); font-size: 17.750px; color: #3c3c3c; }
.pop-head { height: 159px; flex: none; padding: 24px 31px 0; display: flex; flex-direction: column; gap: 12px; }
.dd { position: relative; background: #fff; border: 1px solid #d8d8d8; border-radius: 15px; display: flex; align-items: center; white-space: nowrap; }
.dd-a { height: 51px; padding-left: 17px; font-size: 16.500px; }
.dd-b { height: 47px; padding: 2px 0 0 18px; }
.dd-ic { width: 19px; height: 14px; margin-right: 19px; }
.caret-dd { position: absolute; right: 8px; top: 22px; }
.caret-dd2 { position: absolute; right: 16px; top: 17px; }
.pop-body { flex: 1; background: #fff; padding: 20px 30px 0; line-height: 27px; color: #444; white-space: nowrap; }
.pop-foot { height: 98px; flex: none; padding: 0 32px 0 41px; display: flex; align-items: center; }
.pf-note { width: 28px; height: 30px; flex: none; }
.pf-sep { width: 1px; height: 16px; margin-left: 18px; background: #dcdcdc; }
.pf-mark { width: 23px; height: 30px; margin: -3px 0 0 17px; flex: none; }
.pf-copy { width: 21px; height: 25px; margin-left: auto; flex: none; }
.pf-copytxt { margin: 0 23px 0 9px; font-size: 19px; color: #333; }
.regen { width: 169px; height: 51px; flex: none; display: flex; align-items: center; padding: 3px 0 0 15px; background: #fff; border: 1px solid #d9d9d9; border-radius: 14px; font-size: 18.700px; color: #333; }
.regen-ic { width: 25px; height: 24px; margin: -3px 15px 0 0; }
.annot { position: absolute; left: 12px; top: 1px; right: 3px; bottom: 1px; border: 4px solid #ed1c24; }
```
